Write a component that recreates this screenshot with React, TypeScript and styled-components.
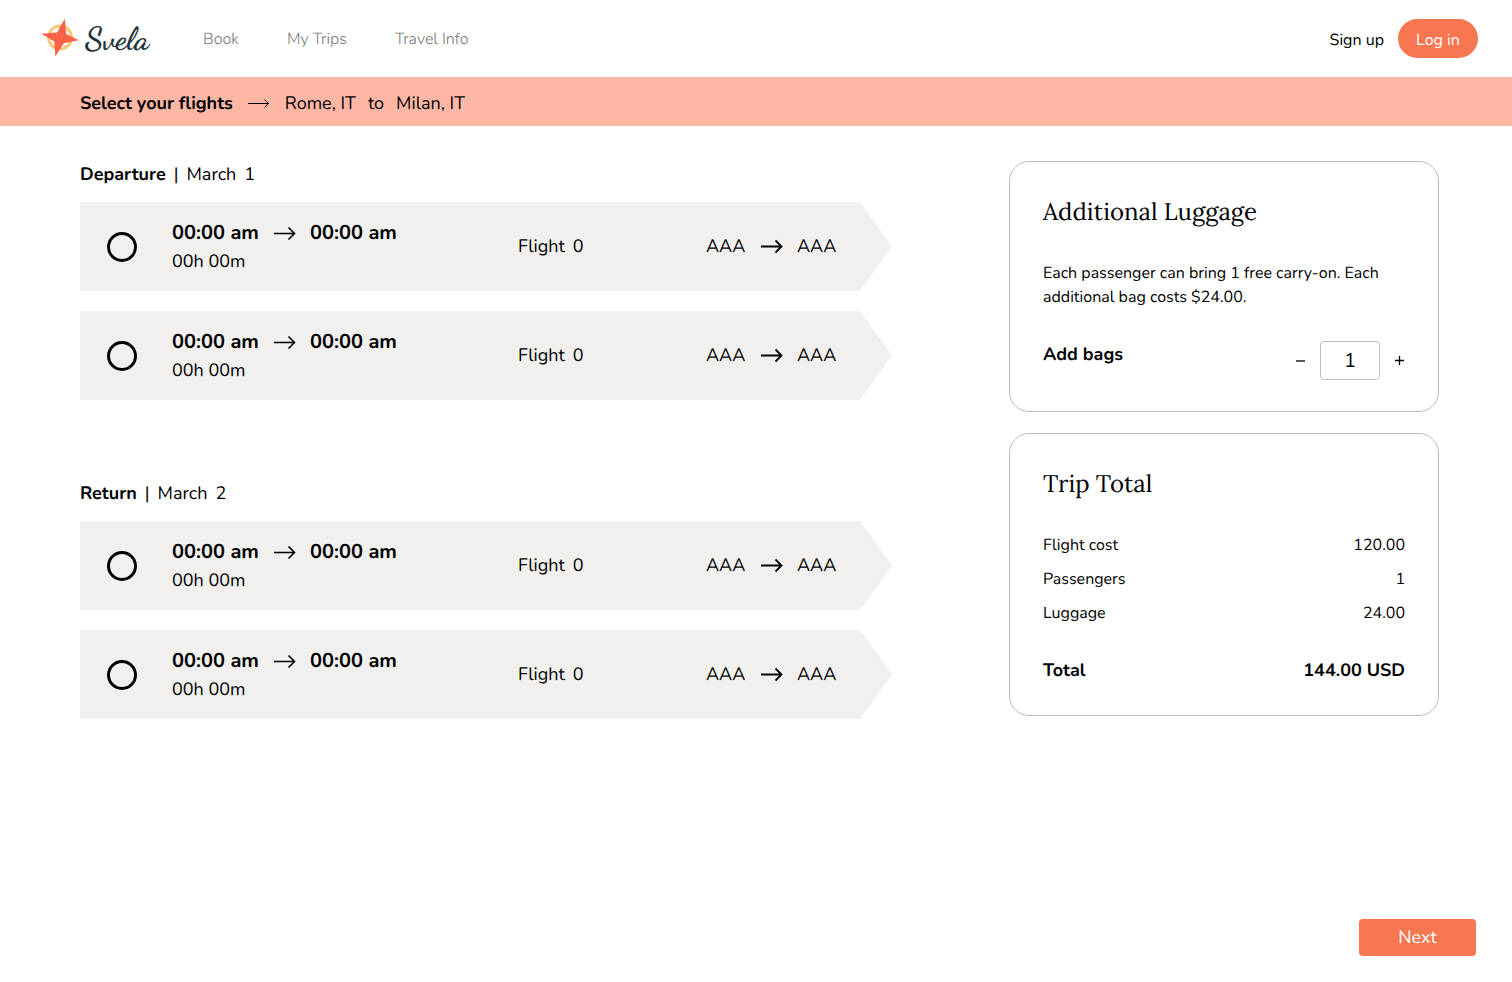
import React, { useState } from 'react';
import styled, { createGlobalStyle } from 'styled-components';

const GlobalStyle = createGlobalStyle`
  *, *::before, *::after { box-sizing: border-box; }
  body {
    margin: 0;
    background: #fff;
    color: #000;
    font-family: Nunito, Lato, sans-serif;
    font-size: 18px;
    line-height: 24px;
    text-rendering: geometricPrecision;
  }
  h1, h2, h3, p, dl, dd { margin: 0; }
  button, input { font: inherit; color: inherit; text-rendering: inherit; }
  button { cursor: pointer; }
`;

const Page = styled.div`
  min-height: 100vh;
  display: flex;
  flex-direction: column;
`;

const Header = styled.header`
  display: flex;
  align-items: center;
  height: 77px;
  padding: 0 34px 0 40px;
  font-size: 16px;
`;

const Logo = styled.a`
  display: flex;
  align-items: center;
  gap: 5px;
  width: 115px;
  color: #22343c;
  text-decoration: none;
`;

const LogoName = styled.span`
  font-family: Satisfy, "Dancing Script", "Kaushan Script", cursive;
  font-size: 32px;
  font-weight: 700;
  line-height: 40px;
`;

const Nav = styled.nav`
  display: flex;
  gap: 48px;
  margin-left: 48px;
`;

const NavLink = styled.a`
  color: #767676;
  font-weight: 300;
  text-decoration: none;
`;

const Account = styled.div`
  display: flex;
  align-items: center;
  gap: 14px;
  margin-left: auto;
`;

const SignUp = styled.a`
  padding-top: 2px;
  color: #000;
  text-decoration: none;
`;

const LogIn = styled.button`
  width: 80px;
  height: 39px;
  padding: 2px 0 0;
  border: 0;
  border-radius: 20px;
  background: #f87650;
  color: #fff;
`;

const Banner = styled.div`
  display: flex;
  align-items: center;
  gap: 15px;
  min-height: 49px;
  padding: 4px 80px 0;
  background: #ffb7a5;
`;

const BannerTitle = styled.h1`
  font-size: 18px;
  line-height: 24px;
  font-weight: 700;
`;

const Route = styled.p`
  display: flex;
  gap: 12px;
`;

const Main = styled.main`
  display: flex;
  justify-content: space-between;
  align-items: flex-start;
  gap: 40px;
  padding: 35px 73px 40px 80px;
`;

const Flights = styled.div`
  flex: 0 1 812px;
  display: flex;
  flex-direction: column;
  gap: 80px;
`;

const Leg = styled.section`
  display: flex;
  flex-direction: column;
  gap: 20px;
`;

const LegTitle = styled.h2`
  display: flex;
  gap: 8px;
  margin-bottom: -7px;
  font-size: 18px;
  line-height: 28px;
  font-weight: 400;
`;

const FlightCard = styled.label`
  display: grid;
  grid-template-columns: 30px minmax(223px, 311px) minmax(64px, 153px) auto;
  column-gap: 35px;
  align-items: center;
  min-height: 89px;
  padding: 0 32px 0 27px;
  background: #f1f0ee;
  clip-path: polygon(0 0, calc(100% - 32px) 0, 100% 50%, calc(100% - 32px) 100%, 0 100%);
  cursor: pointer;
`;

const Radio = styled.input`
  appearance: none;
  width: 30px;
  height: 30px;
  margin: 0;
  border: 3px solid #000;
  border-radius: 50%;

  &:checked {
    background: #f87650;
    background-clip: content-box;
    padding: 4px;
  }
`;

const Times = styled.span`
  display: grid;
  grid-template-columns: 102px 36px auto;
  justify-content: start;
  align-items: center;
  padding-top: 2px;
  line-height: 28px;
`;

const Time = styled.strong`
  font-size: 20px;
  font-weight: 700;
`;

const FlightNumber = styled.span`
  display: flex;
  gap: 8px;
`;

const Airports = styled.span`
  display: grid;
  grid-template-columns: 55px 36px auto;
  justify-content: start;
  align-items: center;
`;

const Sidebar = styled.aside`
  flex: 0 0 430px;
  display: flex;
  flex-direction: column;
  gap: 21px;
`;

const Card = styled.section`
  padding: 34px 33px 31px;
  border: 1px solid #bdbdbd;
  border-radius: 20px;
`;

const CardTitle = styled.h2`
  margin-bottom: 28px;
  font-family: Lora, "Liberation Serif", serif;
  font-size: 24px;
  line-height: 32px;
  font-weight: 400;
`;

const Note = styled.p`
  margin: 33px 0 32px;
  font-size: 16px;
`;

const BagRow = styled.div`
  display: flex;
  justify-content: space-between;
`;

const BagLabel = styled.label`
  font-weight: 700;
  line-height: 28px;
`;

const Stepper = styled.div`
  display: flex;
  align-items: center;
  gap: 14px;
`;

const StepButton = styled.button`
  display: flex;
  padding: 0;
  border: 0;
  background: none;
`;

const BagInput = styled.input`
  width: 60px;
  height: 39px;
  padding: 2px 0 0;
  border: 1px solid #bdbdbd;
  border-radius: 4px;
  background: #fff;
  font-size: 20px;
  text-align: center;
`;

const Costs = styled.dl`
  font-size: 16px;
`;

const CostRow = styled.div<{ $total?: boolean }>`
  display: flex;
  justify-content: space-between;
  margin-top: ${(p) => (p.$total ? '28px' : '0')};
  font-size: ${(p) => (p.$total ? '18px' : '16px')};
  line-height: ${(p) => (p.$total ? '26px' : '34px')};
  font-weight: ${(p) => (p.$total ? 700 : 400)};
`;

const Footer = styled.footer`
  display: flex;
  justify-content: flex-end;
  margin-top: auto;
  padding: 0 36px 26px;
`;

const Next = styled.button`
  width: 117px;
  height: 37px;
  padding: 0;
  border: 0;
  border-radius: 4px;
  background: #f87650;
  color: #fff;
`;

function Compass() {
  return (
    <svg width="40" height="40" viewBox="0 0 40 40" aria-hidden="true">
      <circle cx="20" cy="18.5" r="11.5" fill="none" stroke="#fbc878" strokeWidth="3" />
      <path
        d="M24.8 -0.4 L26.2 15 L38.8 21.2 L23.8 24.2 L15.3 37.4 L14.3 22.4 L1.4 14.8 L17 13.4 Z"
        fill="#fb6349"
      />
    </svg>
  );
}

function Arrow({ weight = 2, head = 6 }: { weight?: number; head?: number }) {
  return (
    <svg width="22" height="16" viewBox="0 0 22 16" fill="none" stroke="#000" strokeWidth={weight} aria-hidden="true">
      <path d={`M0 7.5H20.5M${20.5 - head} ${7.5 - head}L20.5 7.5L${20.5 - head} ${7.5 + head}`} />
    </svg>
  );
}

const legs = [
  { name: 'Departure', day: '1' },
  { name: 'Return', day: '2' },
];

export default function App() {
  const [bags, setBags] = useState(1);
  const luggage = bags * 24;

  return (
    <Page>
      <GlobalStyle />
      <Header>
        <Logo href="#">
          <Compass />
          <LogoName>Svela</LogoName>
        </Logo>
        <Nav>
          <NavLink href="#">Book</NavLink>
          <NavLink href="#">My Trips</NavLink>
          <NavLink href="#">Travel Info</NavLink>
        </Nav>
        <Account>
          <SignUp href="#">Sign up</SignUp>
          <LogIn type="button">Log in</LogIn>
        </Account>
      </Header>
      <Banner>
        <BannerTitle>Select your flights</BannerTitle>
        <Arrow weight={1} head={4} />
        <Route>
          <span>Rome, IT</span>
          <span>to</span>
          <span>Milan, IT</span>
        </Route>
      </Banner>
      <Main>
        <Flights>
          {legs.map((leg) => (
            <Leg key={leg.name}>
              <LegTitle>
                <strong>{leg.name}</strong>
                <span>|</span>
                <span>March</span>
                <span>{leg.day}</span>
              </LegTitle>
              {[0, 1].map((i) => (
                <FlightCard key={i}>
                  <Radio type="radio" name={leg.name} />
                  <Times>
                    <Time>00:00 am</Time>
                    <Arrow weight={1.6} />
                    <Time>00:00 am</Time>
                    <span>00h 00m</span>
                  </Times>
                  <FlightNumber>
                    <span>Flight</span>
                    <span>0</span>
                  </FlightNumber>
                  <Airports>
                    <span>AAA</span>
                    <Arrow weight={1.8} />
                    <span>AAA</span>
                  </Airports>
                </FlightCard>
              ))}
            </Leg>
          ))}
        </Flights>
        <Sidebar>
          <Card>
            <CardTitle>Additional Luggage</CardTitle>
            <Note>Each passenger can bring 1 free carry-on. Each additional bag costs $24.00.</Note>
            <BagRow>
              <BagLabel htmlFor="bags">Add bags</BagLabel>
              <Stepper>
                <StepButton type="button" aria-label="Remove a bag" onClick={() => setBags(Math.max(0, bags - 1))}>
                  <svg width="11" height="11" viewBox="0 0 11 11" stroke="#000" strokeWidth="1.3">
                    <path d="M1 6H10" />
                  </svg>
                </StepButton>
                <BagInput
                  id="bags"
                  inputMode="numeric"
                  value={bags}
                  onChange={(e) => setBags(Number(e.target.value) || 0)}
                />
                <StepButton type="button" aria-label="Add a bag" onClick={() => setBags(bags + 1)}>
                  <svg width="11" height="11" viewBox="0 0 11 11" stroke="#000" strokeWidth="1.3">
                    <path d="M1 5.5H10M5.5 1V10" />
                  </svg>
                </StepButton>
              </Stepper>
            </BagRow>
          </Card>
          <Card>
            <CardTitle>Trip Total</CardTitle>
            <Costs>
              <CostRow>
                <dt>Flight cost</dt>
                <dd>120.00</dd>
              </CostRow>
              <CostRow>
                <dt>Passengers</dt>
                <dd>1</dd>
              </CostRow>
              <CostRow>
                <dt>Luggage</dt>
                <dd>{luggage.toFixed(2)}</dd>
              </CostRow>
              <CostRow $total>
                <dt>Total</dt>
                <dd>{(120 + luggage).toFixed(2)} USD</dd>
              </CostRow>
            </Costs>
          </Card>
        </Sidebar>
      </Main>
      <Footer>
        <Next type="button">Next</Next>
      </Footer>
    </Page>
  );
}
